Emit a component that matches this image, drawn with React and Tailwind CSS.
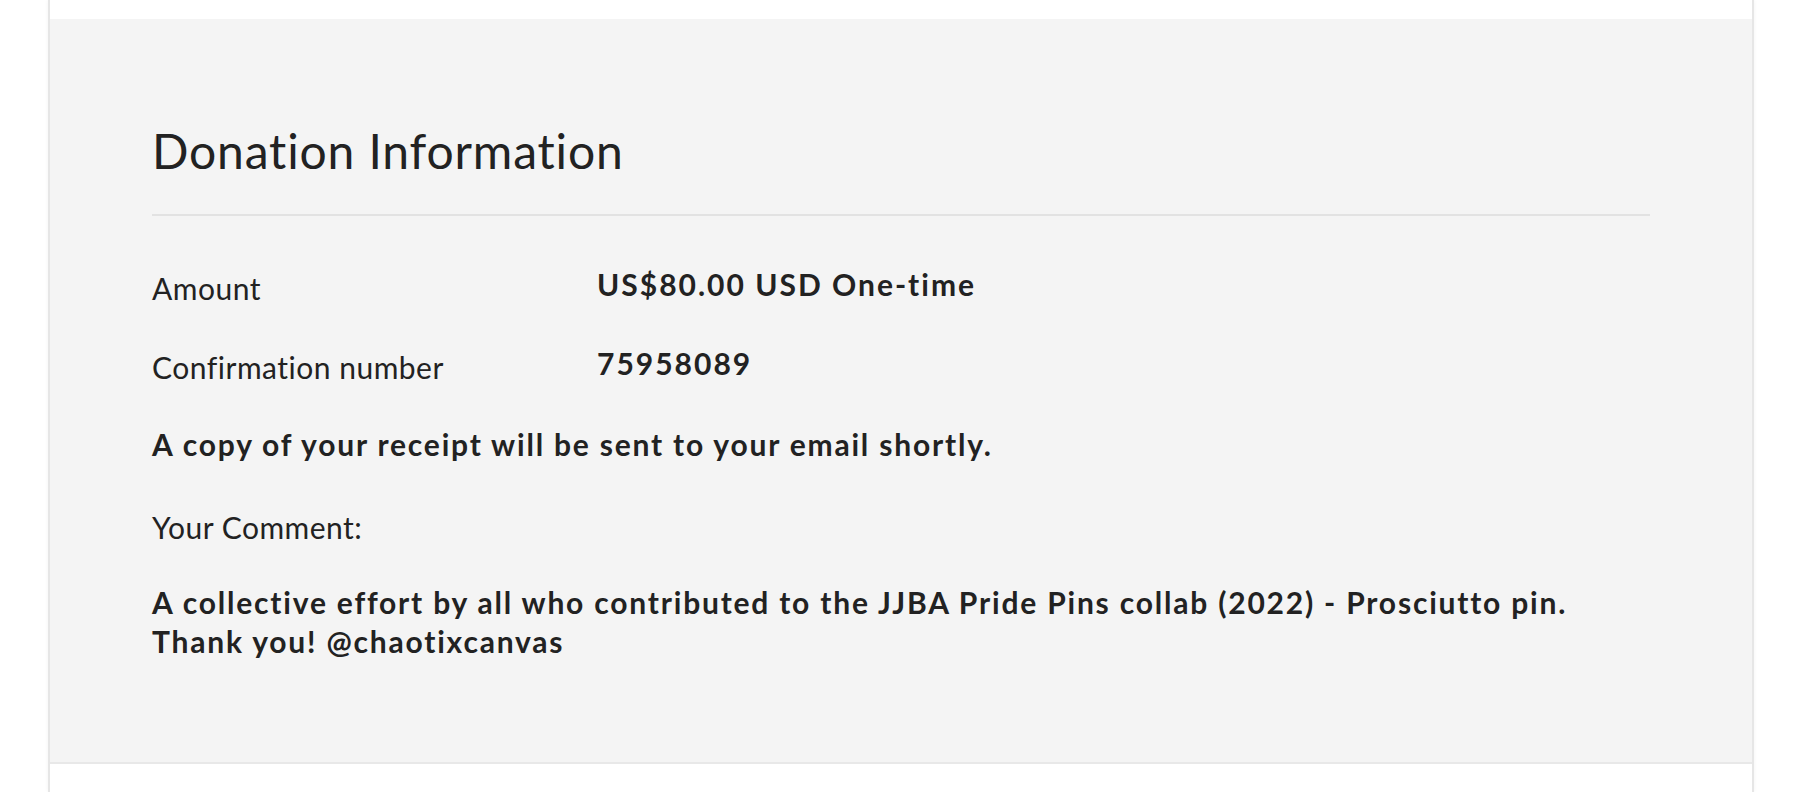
import React from "react";

const rows = [
  { label: "Amount", value: "US$80.00 USD One-time" },
  { label: "Confirmation number", value: "75958089" },
];

export default function App() {
  return (
    <div className="min-h-screen bg-white font-['Lato',sans-serif] text-[#222222]">
      <div className="mx-auto flex min-h-[792px] w-[1706px] flex-col border-x-2 border-[#e6e6e6] bg-white shadow-[0_0_4px_rgba(0,0,0,0.05)]">
        {/* strip left over from the section above */}
        <div className="h-[19px]" />

        {/* Donation summary panel */}
        <section className="border-b-2 border-[#e8e8e8] bg-[#f4f4f4] px-[102px] pt-[103px] pb-[101px]">
          <h2 className="border-b-2 border-[#e2e2e2] pb-[34px] text-[48px] font-normal leading-[58px] tracking-[0.85px]">
            Donation Information
          </h2>

          <div className="mt-[50px] flex flex-col gap-[39px]">
            {rows.map((row) => (
              <div key={row.label} className="flex items-start">
                <span className="w-[445px] shrink-0 pt-[4px] text-[30px] leading-[36px] tracking-[0.5px]">
                  {row.label}
                </span>
                <span className="text-[30px] font-bold leading-[36px] tracking-[2px]">
                  {row.value}
                </span>
              </div>
            ))}
          </div>

          <p className="mt-[41px] text-[30px] font-bold leading-[36px] tracking-[1.8px]">
            A copy of your receipt will be sent to your email shortly.
          </p>

          <p className="mt-[47px] text-[30px] leading-[36px] tracking-[0.5px]">
            Your Comment:
          </p>

          <p className="mt-[38px] text-[30px] font-bold leading-[39px] tracking-[1.8px]">
            A collective effort by all who contributed to the JJBA Pride Pins
            collab (2022) - Prosciutto pin.
            <br />
            Thank you! @chaotixcanvas
          </p>
        </section>

        <div className="flex-1" />
      </div>
    </div>
  );
}
